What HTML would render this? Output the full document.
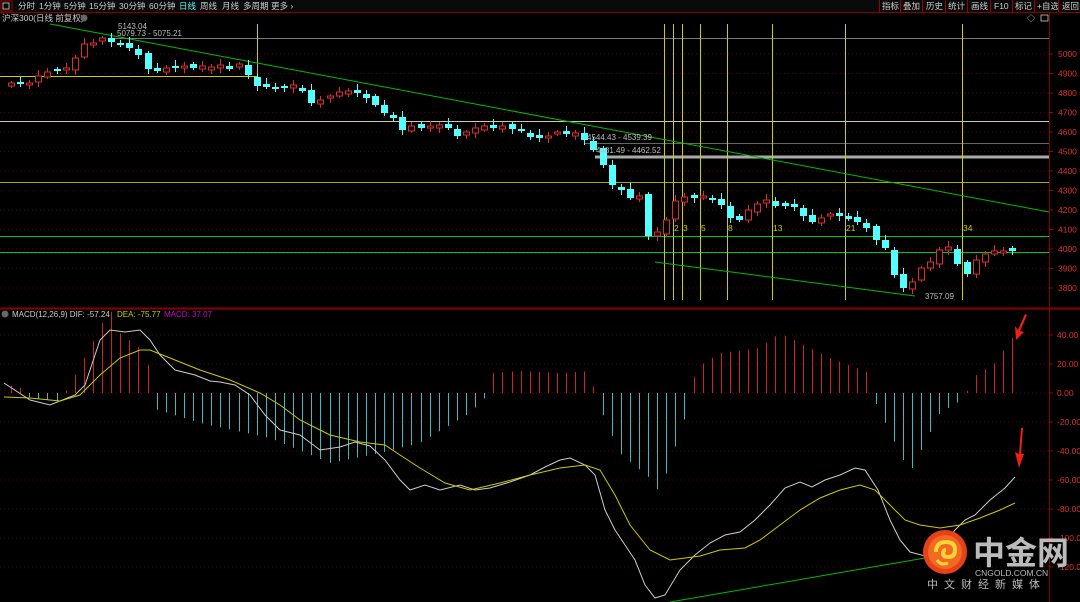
<!DOCTYPE html>
<html><head><meta charset="utf-8"><style>
html,body{margin:0;padding:0;background:#000;width:1080px;height:602px;overflow:hidden;font-family:"Liberation Sans","Noto Sans CJK SC",sans-serif}
svg{position:absolute;left:0;top:0}
</style></head><body>
<svg id="s" width="1080" height="602" xmlns="http://www.w3.org/2000/svg" font-family="Liberation Sans, Noto Sans CJK SC, sans-serif">
<rect width="1080" height="602" fill="#000"/>
<rect x="0" y="0" width="1080" height="12" fill="#0a0a0a"/>
<line x1="0" y1="12.5" x2="1080" y2="12.5" stroke="#8a0000"/>
<rect x="1" y="1" width="11" height="10" fill="none" stroke="#900"/>
<rect x="3" y="3" width="6" height="6" fill="none" stroke="#ccc" stroke-width="0.8"/>
<g font-size="8.5" fill="#ccc">
<text x="18" y="9">分时</text><text x="39" y="9">1分钟</text><text x="64" y="9">5分钟</text><text x="89" y="9">15分钟</text><text x="119" y="9">30分钟</text><text x="149" y="9">60分钟</text><text x="179" y="9" fill="#5ff">日线</text><text x="200" y="9">周线</text><text x="222" y="9">月线</text><text x="243" y="9">多周期</text><text x="271" y="9">更多 ›</text>
<text x="882" y="9">指标</text><text x="903" y="9">叠加</text><text x="926" y="9">历史</text><text x="948" y="9">统计</text><text x="971" y="9">画线</text><text x="994" y="9">F10</text><text x="1015" y="9">标记</text><text x="1037" y="9">+自选</text><text x="1062" y="9">返回</text>
</g>
<g stroke="#900"><line x1="879.5" y1="0" x2="879.5" y2="12"/><line x1="900.5" y1="0" x2="900.5" y2="12"/><line x1="922.5" y1="0" x2="922.5" y2="12"/><line x1="945.5" y1="0" x2="945.5" y2="12"/><line x1="967.5" y1="0" x2="967.5" y2="12"/><line x1="990.5" y1="0" x2="990.5" y2="12"/><line x1="1012.5" y1="0" x2="1012.5" y2="12"/><line x1="1034.5" y1="0" x2="1034.5" y2="12"/><line x1="1058.5" y1="0" x2="1058.5" y2="12"/></g>
<text x="2" y="21" font-size="8.5" fill="#ccc">沪深300(日线 前复权)</text>
<circle cx="84" cy="18" r="3.5" fill="#666"/>
<text x="1027" y="21" font-size="8" fill="#ccc">◇</text><rect x="1041" y="15" width="7" height="6" fill="none" stroke="#ccc" stroke-width="0.8"/>
<line x1="1049.5" y1="12" x2="1049.5" y2="602" stroke="#8a0000"/>
<line x1="0" y1="308.5" x2="1080" y2="308.5" stroke="#8a0000" stroke-width="2"/>
<g id="grid"></g>
<g id="main"></g>
<g id="macd"></g>
<circle cx="945" cy="552" r="22" fill="#e8401a"/>
<circle cx="945" cy="552" r="17" fill="#f06a20"/>
<path d="M936 552 q0 -10 10 -10 q9 0 9 8 q0 7 -7 7 q-5 0 -5 -4 q0 -3 3 -3" fill="none" stroke="#ffd23a" stroke-width="4"/>
<path d="M937 560 q4 6 11 3" fill="none" stroke="#ffd23a" stroke-width="3"/>
<text x="973" y="564" font-size="32" font-weight="bold" fill="#bbb" font-family="Noto Sans CJK SC, sans-serif">中金网</text>
<text x="975" y="576" font-size="8.5" fill="#bbb">CNGOLD.COM.CN</text>
<text x="927" y="588" font-size="11" fill="#bbb" letter-spacing="6" font-family="Noto Sans CJK SC, sans-serif">中文财经新媒体</text>
</svg>
<script>
(function(){
var NS="http://www.w3.org/2000/svg";
function el(p,t,a,txt){var e=document.createElementNS(NS,t);for(var k in a)e.setAttribute(k,a[k]);if(txt!==undefined)e.textContent=txt;document.getElementById(p).appendChild(e);return e;}
for(var p=5000;p>=3800;p-=100){var y=54+(5000-p)*0.195;
 el("grid","line",{x1:0,y1:y,x2:1049,y2:y,stroke:"#5a0000","stroke-dasharray":"1,3"});
 el("grid","line",{x1:1049,y1:y,x2:1053,y2:y,stroke:"#a00"});
 el("grid","text",{x:1058,y:y+3,"font-size":"8.5",fill:"#e03030"},String(p));}
var mg=[[40,335],[20,364],[0,393],[-20,422],[-40,451],[-60,480],[-80,509],[-100,538],[-120,567]];
mg.forEach(function(m){el("grid","line",{x1:0,y1:m[1],x2:1049,y2:m[1],stroke:"#5a0000","stroke-dasharray":"1,3"});
 el("grid","line",{x1:1049,y1:m[1],x2:1053,y2:m[1],stroke:"#a00"});
 el("grid","text",{x:1057,y:m[1]+3,"font-size":"8.5",fill:"#e03030"},m[0].toFixed(2));});
el("main","line",{x1:110,y1:38.5,x2:1049,y2:38.5,stroke:"#777"});
el("main","line",{x1:0,y1:76.5,x2:258,y2:76.5,stroke:"#cc0"});
el("main","line",{x1:0,y1:121.5,x2:1049,y2:121.5,stroke:"#cca"});
el("main","line",{x1:0,y1:182.5,x2:1049,y2:182.5,stroke:"#aa0"});
el("main","line",{x1:585,y1:143.5,x2:1049,y2:143.5,stroke:"#666"});
el("main","line",{x1:595,y1:157,x2:1049,y2:157,stroke:"#aaa","stroke-width":3});
el("main","line",{x1:0,y1:236.5,x2:1049,y2:236.5,stroke:"#0c0"});
el("main","line",{x1:0,y1:252.5,x2:1049,y2:252.5,stroke:"#0c0"});
el("main","line",{x1:257.5,y1:24,x2:257.5,y2:78,stroke:"#cc0"});
[[664,"1"],[673,"2"],[682,"3"],[700,"5"],[727,"8"],[772,"13"],[845,"21"],[962,"34"]].forEach(function(v){
 el("main","line",{x1:v[0]+.5,y1:24,x2:v[0]+.5,y2:300,stroke:"#cc0"});
 el("main","text",{x:v[0]+1,y:231,"font-size":"8.5",fill:"#cc0"},v[1]);});
el("main","line",{x1:50,y1:24,x2:1049,y2:212,stroke:"#0b0"});
el("main","line",{x1:655,y1:262,x2:915,y2:296,stroke:"#0b0"});
var ys=[83,83,83,76,72,70,68,58,44,43,38,42,44,48,55,69,70,68,67,66,68,67,68,66,68,65,75,86,86,89,87,86,91,103,100,96,92,91,93,98,105,113,118,130,126,128,126,125,128,136,133,128,126,128,126,129,131,137,137,136,132,133,134,140,150,165,185,190,198,196,236,232,220,201,197,198,196,200,205,218,220,210,204,200,206,205,206,216,222,218,214,215,218,222,228,240,248,275,288,282,268,262,250,248,264,274,260,254,252,251,250];
var n=ys.length;
for(var i=0;i<n;i++){var x=Math.round(1012-(n-1-i)*9.1)+.5;var c=ys[i];var o=i?ys[i-1]+((i*7)%5-2):c+3;
 var bt=Math.min(o,c),bb=Math.max(o,c);if(bb-bt<2){bt-=1;bb+=1;}
 var up=c<o;var col=up?"#d83030":"#54ffff";
 var wt=bt-2-(i*3)%5,wb=bb+2+(i*5)%4;
 el("main","line",{x1:x,y1:wt,x2:x,y2:wb,stroke:col});
 if(up)el("main","rect",{x:x-3,y:bt,width:6,height:bb-bt,fill:"#000",stroke:col});
 else el("main","rect",{x:x-3.5,y:bt,width:7,height:bb-bt,fill:col});}
el("main","text",{x:118,y:29,"font-size":"8",fill:"#bbb"},"5143.04");
el("main","text",{x:117,y:36,"font-size":"8",fill:"#bbb"},"5079.73 - 5075.21");
el("main","text",{x:587,y:140,"font-size":"8",fill:"#bbb"},"4544.43 - 4539.39");
el("main","text",{x:596,y:153,"font-size":"8",fill:"#bbb"},"4481.49 - 4462.52");
el("main","text",{x:925,y:299,"font-size":"8",fill:"#bbb"},"3757.09");
el("macd","circle",{cx:5,cy:314,r:3.5,fill:"#666"});
el("macd","text",{x:12,y:317,"font-size":"8","fill":"#ccc"},"MACD(12,26,9)  DIF: -57.24");
el("macd","text",{x:117,y:317,"font-size":"8","fill":"#cc0"},"DEA: -75.77");
el("macd","text",{x:164,y:317,"font-size":"8","fill":"#c0c"},"MACD: 37.07");
var hk=[[0,10],[25,4],[30,-5],[60,-8],[70,8],[95,55],[110,85],[120,60],[140,45],[150,25],[152,-15],[200,-30],[270,-45],[330,-70],[380,-60],[420,-50],[470,-20],[485,-5],[492,20],[520,22],[560,20],[590,22],[596,-5],[620,-60],[650,-85],[660,-100],[690,-10],[696,25],[720,40],[760,45],[780,60],[800,50],[830,35],[870,20],[876,-10],[900,-60],[910,-80],[925,-50],[940,-20],[965,-5],[972,15],[995,30],[1012,55]];
function hv(x){for(var k=1;k<hk.length;k++){if(x<=hk[k][0]){var a=hk[k-1],b=hk[k];return a[1]+(b[1]-a[1])*(x-a[0])/(b[0]-a[0]);}}return 55;}
for(var i=0;i<n;i++){var x=Math.round(1012-(n-1-i)*9.1)+.5;var h=hv(x);
 el("macd","line",{x1:x,y1:393,x2:x,y2:393-h,stroke:h>0?"#d02020":"#40b8c0"});}
var dif="4,383 30,400 50,405 75,395 85,385 100,340 110,330 125,332 140,330 150,340 160,355 175,370 195,375 210,381 220,382 235,385 250,395 265,415 280,430 300,435 320,450 340,447 355,442 370,446 385,460 400,480 410,490 425,485 440,490 460,485 475,490 490,488 510,482 530,475 545,467 560,460 570,458 585,465 595,475 605,510 615,530 625,545 635,560 645,585 655,598 665,595 680,570 695,555 710,543 725,535 740,532 755,520 770,505 785,488 800,482 812,487 825,480 840,475 855,468 865,470 878,490 890,520 900,540 910,552 925,556 940,548 955,530 965,520 975,515 990,500 1005,488 1015,477";
var dea="4,397 30,398 60,401 80,395 100,375 120,358 140,350 150,350 170,358 200,370 230,380 260,393 280,405 300,420 330,435 360,442 385,445 400,455 420,468 445,483 470,490 500,483 530,475 560,468 585,465 600,470 615,495 630,525 650,550 670,560 700,556 720,550 745,548 760,540 780,525 800,510 820,498 840,490 860,485 875,490 890,505 905,520 920,525 940,528 960,525 980,518 1000,510 1015,503";
el("macd","polyline",{points:dif,fill:"none",stroke:"#ccc"});
el("macd","polyline",{points:dea,fill:"none",stroke:"#cc0"});
el("macd","line",{x1:670,y1:602,x2:925,y2:558,stroke:"#0b0"});
el("macd","path",{d:"M1025 314 L1018 330 L1015 326 L1016 340 L1024 332 L1020 331 L1027 315 Z",fill:"#f02010"});
el("macd","path",{d:"M1021 428 L1019 454 L1015 452 L1019 468 L1024 454 L1021 454 L1023 428 Z",fill:"#f02010"});
})();
</script>
</body></html>
